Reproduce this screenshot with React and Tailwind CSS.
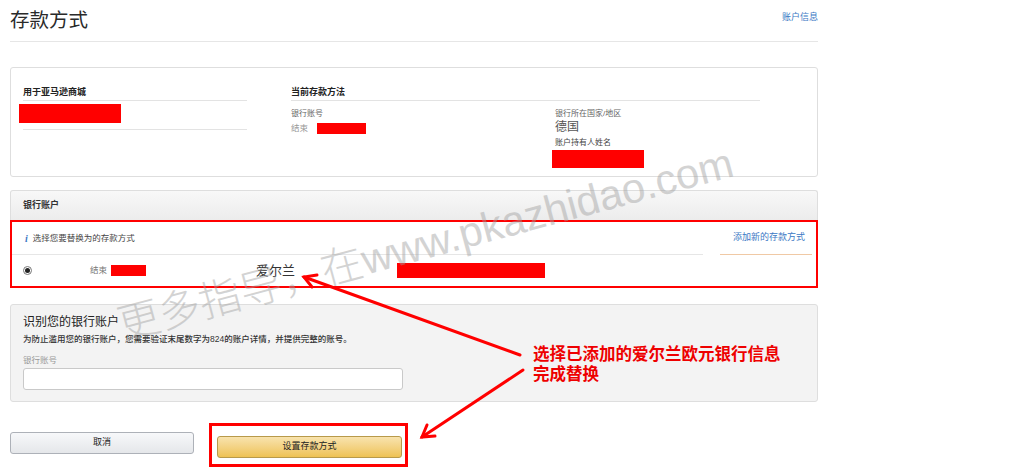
import React from "react";

const red = "bg-[#ff0000]";

function Header() {
  return (
    <div className="flex h-[42px] items-start justify-between border-b border-[#e6e6e6]">
      <h1 className="pt-[8px] text-[19.5px] leading-[24px] text-[#2a2a2a]">存款方式</h1>
      <a className="pt-[11px] text-[9px] leading-[12px] text-[#3b78c4]">账户信息</a>
    </div>
  );
}

function SummaryCard() {
  return (
    <div className="mt-[25px] flex h-[110px] rounded-[3px] border border-[#dedede] px-[12px] pt-[18px]">
      <div className="w-[224px]">
        <div className="border-b border-[#e3e3e3] pb-[2px] text-[9px] font-bold leading-[12px] text-[#222]">
          用于亚马逊商城
        </div>
        <div className={`-ml-[4px] mt-[3px] h-[19px] w-[102px] ${red}`} />
        <div className="mt-[6px] border-b border-[#e3e3e3]" />
      </div>
      <div className="ml-[44px] w-[469px]">
        <div className="border-b border-[#e3e3e3] pb-[2px] text-[9px] font-bold leading-[12px] text-[#222]">
          当前存款方法
        </div>
        <div className="flex">
          <div className="w-[264px]">
            <div className="mt-[8px] text-[8px] leading-[10px] text-[#666]">银行账号</div>
            <div className="mt-[4px] flex items-center">
              <span className="text-[8.5px] leading-[11px] text-[#999]">结束</span>
              <span className={`ml-[9px] h-[11px] w-[49px] ${red}`} />
            </div>
          </div>
          <div>
            <div className="mt-[8px] text-[8px] leading-[10px] text-[#666]">银行所在国家/地区</div>
            <div className="mt-[1px] text-[12px] leading-[14px] text-[#555]">德国</div>
            <div className="mt-[4px] text-[8px] leading-[10px] text-[#444]">账户持有人姓名</div>
            <div className={`-ml-[3px] mt-[2px] h-[18px] w-[92px] ${red}`} />
          </div>
        </div>
      </div>
    </div>
  );
}

function BankAccounts() {
  return (
    <div className="mt-[13px]">
      <div className="flex h-[30px] items-center rounded-t-[3px] border border-b-0 border-[#dedede] bg-gradient-to-b from-[#f8f8f8] to-[#ececec] pl-[12px]">
        <span className="text-[9px] font-bold text-[#333]">银行账户</span>
      </div>
      <div className="h-[68px] border-2 border-[#ff0000] bg-white">
        <div className="flex h-[32px] items-center justify-between pl-[13px] pr-[11px]">
          <div className="flex items-center">
            <span className="font-['Liberation_Serif',serif] text-[10px] font-bold italic text-[#3b78c4]">i</span>
            <span className="ml-[5px] text-[8.5px] text-[#444]">选择您要替换为的存款方式</span>
          </div>
          <a className="text-[9px] text-[#3b78c4]">添加新的存款方式</a>
        </div>
        <div className="flex h-px">
          <div className="w-[691px] bg-[#e6e6e6]" />
          <div className="ml-[17px] w-[92px] bg-[#f0c9a5]" />
        </div>
        <div className="flex h-[31px] items-center pl-[11px]">
          <span className="flex h-[9px] w-[9px] items-center justify-center rounded-full border border-[#777] bg-white">
            <span className="h-[5px] w-[5px] rounded-full bg-[#222]" />
          </span>
          <span className="ml-[58px] text-[8.5px] text-[#777]">结束</span>
          <span className={`ml-[4px] h-[11px] w-[35px] ${red}`} />
          <span className="ml-[110px] text-[13px] text-[#333]">爱尔兰</span>
          <span className={`ml-[102px] h-[15px] w-[148px] ${red}`} />
        </div>
      </div>
    </div>
  );
}

function VerifyCard() {
  return (
    <div className="mt-[16px] h-[98px] rounded-[3px] border border-[#dedede] bg-[#f3f3f3] px-[12px] pt-[10px]">
      <div className="text-[12px] leading-[14px] text-[#222]">识别您的银行账户</div>
      <div className="mt-[5px] text-[8.5px] font-medium leading-[10px] text-[#333]">
        为防止滥用您的银行账户，您需要验证末尾数字为824的账户详情，并提供完整的账号。
      </div>
      <div className="mt-[11px] font-['Liberation_Serif','Noto_Sans_CJK_SC',serif] text-[8.5px] leading-[10px] text-[#999]">
        银行账号
      </div>
      <div className="mt-[3px] h-[22px] w-[380px] rounded-[3px] border border-[#c9c9c9] bg-white" />
    </div>
  );
}

function Buttons() {
  return (
    <div className="mt-[21px] flex items-start">
      <button className="mt-[9px] h-[22px] w-[184px] rounded-[3px] border border-[#adb1b8] bg-gradient-to-b from-[#f7f8fa] to-[#e5e7ea] text-[9px] text-[#222]">
        取消
      </button>
      <div className="ml-[15px] border-[3px] border-[#ff0000] pb-[6px] pl-[5px] pr-[3px] pt-[6px]">
        <button className="h-[22px] w-[185px] rounded-[3px] border border-[#b89a4a] bg-gradient-to-b from-[#f8e3ad] to-[#eec253] text-[9px] text-[#222]">
          设置存款方式
        </button>
      </div>
    </div>
  );
}

function Annotations() {
  return (
    <>
      <div className="pointer-events-none absolute left-[123px] top-[305px] origin-[0_37px] -rotate-[15deg] whitespace-nowrap text-[42px] font-light leading-none text-[#a0a0a0] opacity-45">
        更多指导，在www.pkazhidao.com
      </div>
      <svg className="pointer-events-none absolute left-0 top-0" width="1024" height="468" viewBox="0 0 1024 468">
        <g stroke="#ff0000" strokeWidth="3" fill="none" strokeLinecap="round">
          <line x1="520" y1="355" x2="304" y2="277" />
          <polyline points="317,275 304,277 312,287" />
          <line x1="523" y1="370" x2="422" y2="437" />
          <polyline points="427,425 422,437 435,436" />
        </g>
      </svg>
      <div className="absolute left-[533px] top-[344px] text-[16.5px] font-bold leading-[20px] text-[#ee0000]">
        选择已添加的爱尔兰欧元银行信息
        <br />
        完成替换
      </div>
    </>
  );
}

export default function App() {
  return (
    <div className="relative h-[468px] w-[1024px] overflow-hidden bg-white font-['Liberation_Sans','Noto_Sans_CJK_SC',sans-serif]">
      <div className="ml-[10px] w-[808px]">
        <Header />
        <SummaryCard />
        <BankAccounts />
        <VerifyCard />
        <Buttons />
      </div>
      <Annotations />
    </div>
  );
}
